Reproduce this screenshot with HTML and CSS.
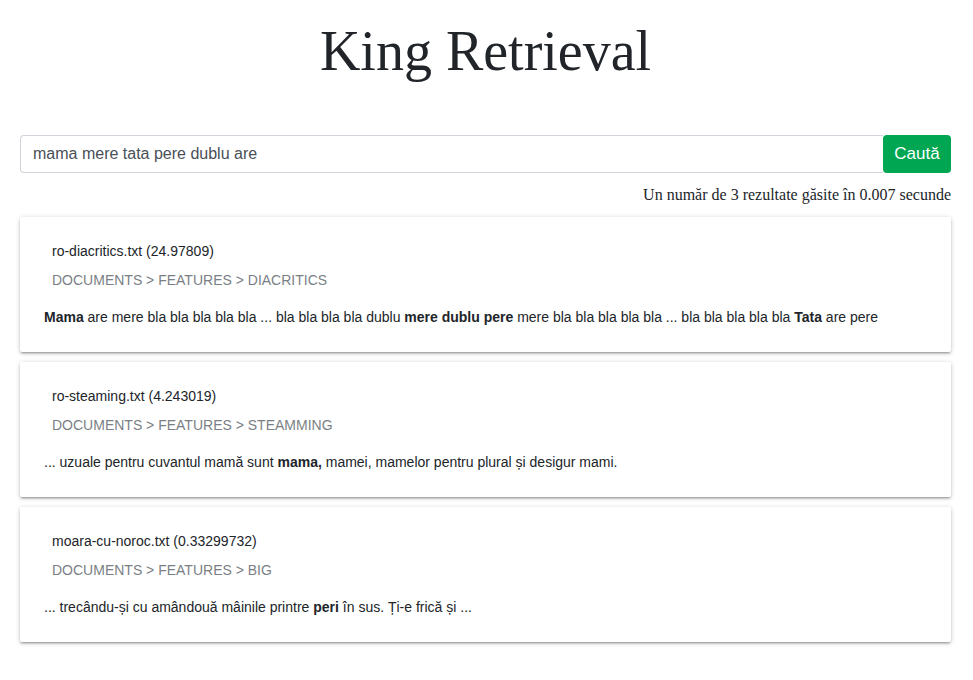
FILE: index.html
```html
<!DOCTYPE html>
<html lang="ro">
<head>
<meta charset="utf-8">
<title>King Retrieval</title>
<link rel="stylesheet" href="styles.css">
</head>
<body>
<div class="container">
  <h1 class="title">King Retrieval</h1>
  <form class="search">
    <input class="search-input" type="text" value="mama mere tata pere dublu are">
    <button class="search-btn" type="button">Caută</button>
  </form>
  <p class="stats">Un număr de 3 rezultate găsite în 0.007 secunde</p>
  <div class="results">
    <div class="card">
      <div class="card-title">ro-diacritics.txt (24.97809)</div>
      <div class="card-path">DOCUMENTS &gt; FEATURES &gt; DIACRITICS</div>
      <div class="card-snippet"><b>Mama</b> are mere bla bla bla bla bla ... bla bla bla bla dublu <b>mere dublu pere</b> mere bla bla bla bla bla ... bla bla bla bla bla <b>Tata</b> are pere</div>
    </div>
    <div class="card">
      <div class="card-title">ro-steaming.txt (4.243019)</div>
      <div class="card-path">DOCUMENTS &gt; FEATURES &gt; STEAMMING</div>
      <div class="card-snippet">... uzuale pentru cuvantul mamă sunt <b>mama,</b> mamei, mamelor pentru plural și desigur mami.</div>
    </div>
    <div class="card">
      <div class="card-title">moara-cu-noroc.txt (0.33299732)</div>
      <div class="card-path">DOCUMENTS &gt; FEATURES &gt; BIG</div>
      <div class="card-snippet">... trecându-și cu amândouă mâinile printre <b>peri</b> în sus. Ți-e frică și ...</div>
    </div>
  </div>
</div>
</body>
</html>
```

FILE: styles.css
```css
* { box-sizing: border-box; }
html, body { margin: 0; padding: 0; background: #fff; }
body {
  font-family: "Liberation Serif", "Times New Roman", serif;
  color: #212529;
}
.container {
  padding: 18px 22px 30px 20px;
}
.title {
  margin: 0 0 50px;
  font-family: "Liberation Serif", serif;
  font-weight: 400;
  font-size: 56px;
  line-height: 67px;
  text-align: center;
  color: #212529;
}
.search {
  display: flex;
  margin: 0;
}
.search-input {
  flex: 1;
  height: 38px;
  margin: 0;
  padding: 6px 12px;
  font-family: "Liberation Sans", Arial, sans-serif;
  font-size: 16px;
  color: #495057;
  border: 1px solid #ced4da;
  border-right: none;
  border-radius: 4px 0 0 4px;
  outline: none;
}
.search-btn {
  height: 38px;
  width: 68px;
  padding: 0;
  font-family: "Liberation Sans", Arial, sans-serif;
  font-size: 17px;
  color: #fff;
  background: #00a651;
  border: none;
  border-radius: 4px;
}
.stats {
  margin: 10px 0 10px;
  font-size: 16px;
  line-height: 24px;
  text-align: right;
}
.results {
  display: flex;
  flex-direction: column;
  gap: 10px;
}
.card {
  height: 135px;
  padding: 24px 24px 0;
  background: #fff;
  border-radius: 2px;
  box-shadow: 0 2px 2px 0 rgba(0,0,0,.14), 0 3px 1px -2px rgba(0,0,0,.12), 0 1px 5px 0 rgba(0,0,0,.2);
  font-family: "Liberation Sans", Arial, sans-serif;
  font-size: 14px;
  line-height: 20px;
  color: #212529;
}
.card-title {
  padding-left: 8px;
}
.card-path {
  padding-left: 8px;
  margin-top: 9px;
  color: #7a7f85;
}
.card-snippet {
  margin-top: 17px;
}
.card-snippet b { font-weight: 700; }
```
